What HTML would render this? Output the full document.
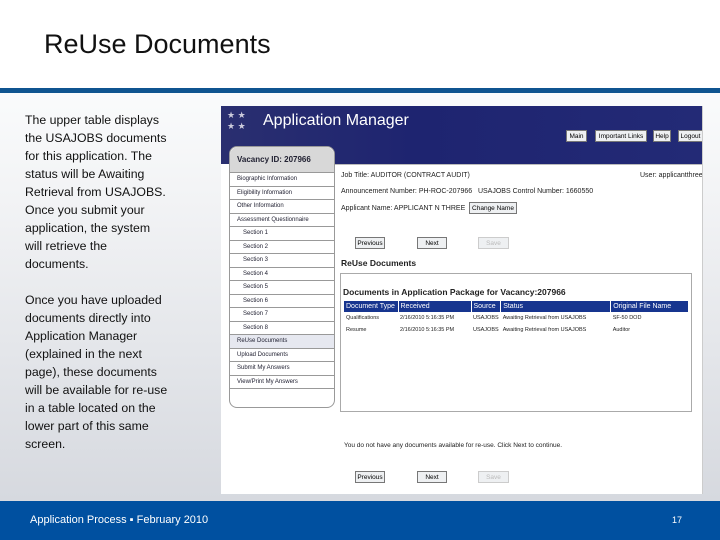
<!DOCTYPE html>
<html><head><meta charset="utf-8"><style>
*{margin:0;padding:0;box-sizing:border-box}
body{width:720px;height:540px;position:relative;overflow:hidden;font-family:"Liberation Sans",sans-serif;background:linear-gradient(#fafbfc 90px,#f2f3f5 200px,#d6d9df 500px)}
.a{position:absolute;white-space:nowrap}
.h{top:0;left:0;width:720px;height:88px;background:#fff}
.bar{top:88px;left:0;width:720px;height:5px;background:#0f5490}
.title{left:44px;top:29px;font-size:27px;color:#111}
.txt{left:25px;top:111px;font-size:12.3px;line-height:18px;color:#111}
.foot{top:501px;left:0;width:720px;height:39px;background:#0050a0;color:#fff;font-size:11px}
.shot{left:221px;top:106px;width:482px;height:388px;background:#fff;overflow:hidden;border-right:1px solid #ccc}
.ban{left:0;top:0;width:482px;height:58px;background:linear-gradient(90deg,#2a2f70,#1e2470 40%,#232a76)}
.s{font-size:7px;color:#222}
.btn{border:1px solid #777;background:#eef0f2;font-size:6.5px;text-align:center;line-height:11px;height:12px}
.side{left:8px;top:40px;width:106px;height:262px;border:1px solid #999;border-radius:8px;background:#fff}
.si{position:absolute;left:0;width:104px;height:13.5px;border-bottom:1px solid #999;font-size:6px;color:#223;padding-left:7px;line-height:13px}
th{background:#17358f;color:#fff;font-weight:normal;text-align:left;font-size:7px;padding:2px 2px;border-right:1px solid #fff;white-space:nowrap}
td{font-size:5.5px;padding:3px 2px;color:#222;white-space:nowrap}
</style></head><body>
<div class="a h"></div>
<div class="a title">ReUse Documents</div>
<div class="a bar"></div>
<div class="a txt">The upper table displays<br>the USAJOBS documents<br>for this application. The<br>status will be Awaiting<br>Retrieval from USAJOBS.<br>Once you submit your<br>application, the system<br>will retrieve the<br>documents.<br><br>Once you have uploaded<br>documents directly into<br>Application Manager<br>(explained in the next<br>page), these documents<br>will be available for re-use<br>in a table located on the<br>lower part of this same<br>screen.</div>

<div class="a shot">
 <div class="a ban"></div>
 <div class="a" style="left:42px;top:6px;font-size:16px;color:#fff">Application Manager</div>
 <div class="a" style="left:6px;top:4px;color:#ccd;font-size:9px;white-space:normal">★ ★<br>★ ★</div>
 <div class="a btn" style="left:345px;top:24px;width:21px">Main</div>
 <div class="a btn" style="left:374px;top:24px;width:52px">Important Links</div>
 <div class="a btn" style="left:432px;top:24px;width:18px">Help</div>
 <div class="a btn" style="left:457px;top:24px;width:25px">Logout</div>
 <div class="a" style="left:114px;top:58px;width:368px;height:330px;background:#fff;border-top:1px solid #bbb"></div>
 <div class="a side">
  <div class="si" style="top:0;height:26px;background:#d8d8d8;font-size:8px;font-weight:bold;line-height:26px;border-radius:8px 8px 0 0">Vacancy ID: 207966</div>
  <div class="si" style="top:26px">Biographic Information</div>
  <div class="si" style="top:39.5px">Eligibility Information</div>
  <div class="si" style="top:53px">Other Information</div>
  <div class="si" style="top:66.5px">Assessment Questionnaire</div>
  <div class="si" style="top:80px;padding-left:13px">Section 1</div>
  <div class="si" style="top:93.5px;padding-left:13px">Section 2</div>
  <div class="si" style="top:107px;padding-left:13px">Section 3</div>
  <div class="si" style="top:120.5px;padding-left:13px">Section 4</div>
  <div class="si" style="top:134px;padding-left:13px">Section 5</div>
  <div class="si" style="top:147.5px;padding-left:13px">Section 6</div>
  <div class="si" style="top:161px;padding-left:13px">Section 7</div>
  <div class="si" style="top:174.5px;padding-left:13px">Section 8</div>
  <div class="si" style="top:188px;background:#e6e8f0">ReUse Documents</div>
  <div class="si" style="top:201.5px">Upload Documents</div>
  <div class="si" style="top:215px">Submit My Answers</div>
  <div class="si" style="top:228.5px">View/Print My Answers</div>
 </div>
 <div class="a s" style="left:120px;top:66px">Job Title: AUDITOR (CONTRACT AUDIT)</div>
 <div class="a s" style="left:419px;top:66px">User: applicantthree</div>
 <div class="a s" style="left:120px;top:82px">Announcement Number: PH-ROC-207966 &nbsp; USAJOBS Control Number: 1660550</div>
 <div class="a s" style="left:120px;top:99px">Applicant Name: APPLICANT N THREE</div>
 <div class="a btn" style="left:248px;top:96px;width:48px">Change Name</div>
 <div class="a btn" style="left:134px;top:131px;width:30px">Previous</div>
 <div class="a btn" style="left:196px;top:131px;width:30px">Next</div>
 <div class="a btn" style="left:257px;top:131px;width:31px;color:#bbb;border-color:#ccc">Save</div>
 <div class="a" style="left:120px;top:152px;font-size:8.5px;font-weight:bold;color:#222">ReUse Documents</div>
 <div class="a" style="left:119px;top:167px;width:352px;height:139px;border:1px solid #aaa"></div>
 <div class="a" style="left:122px;top:181px;font-size:8.5px;font-weight:bold;color:#222">Documents in Application Package for Vacancy:207966</div>
 <table class="a" style="left:123px;top:195px;width:345px;border-collapse:collapse">
  <tr><th style="width:54px">Document Type</th><th style="width:73px">Received</th><th style="width:27px">Source</th><th style="width:110px">Status</th><th>Original File Name</th></tr>
  <tr><td>Qualifications</td><td>2/16/2010 5:16:35 PM</td><td>USAJOBS</td><td>Awaiting Retrieval from USAJOBS</td><td>SF-50 DOD</td></tr>
  <tr><td>Resume</td><td>2/16/2010 5:16:35 PM</td><td>USAJOBS</td><td>Awaiting Retrieval from USAJOBS</td><td>Auditor</td></tr>
 </table>
 <div class="a s" style="left:123px;top:336px;font-size:6.5px">You do not have any documents available for re-use. Click Next to continue.</div>
 <div class="a btn" style="left:134px;top:365px;width:30px">Previous</div>
 <div class="a btn" style="left:196px;top:365px;width:30px">Next</div>
 <div class="a btn" style="left:257px;top:365px;width:31px;color:#bbb;border-color:#ccc">Save</div>
</div>

<div class="a foot"><span class="a" style="left:30px;top:13px">Application Process ▪ February 2010</span><span class="a" style="left:672px;top:14px;font-size:9px">17</span></div>
</body></html>
